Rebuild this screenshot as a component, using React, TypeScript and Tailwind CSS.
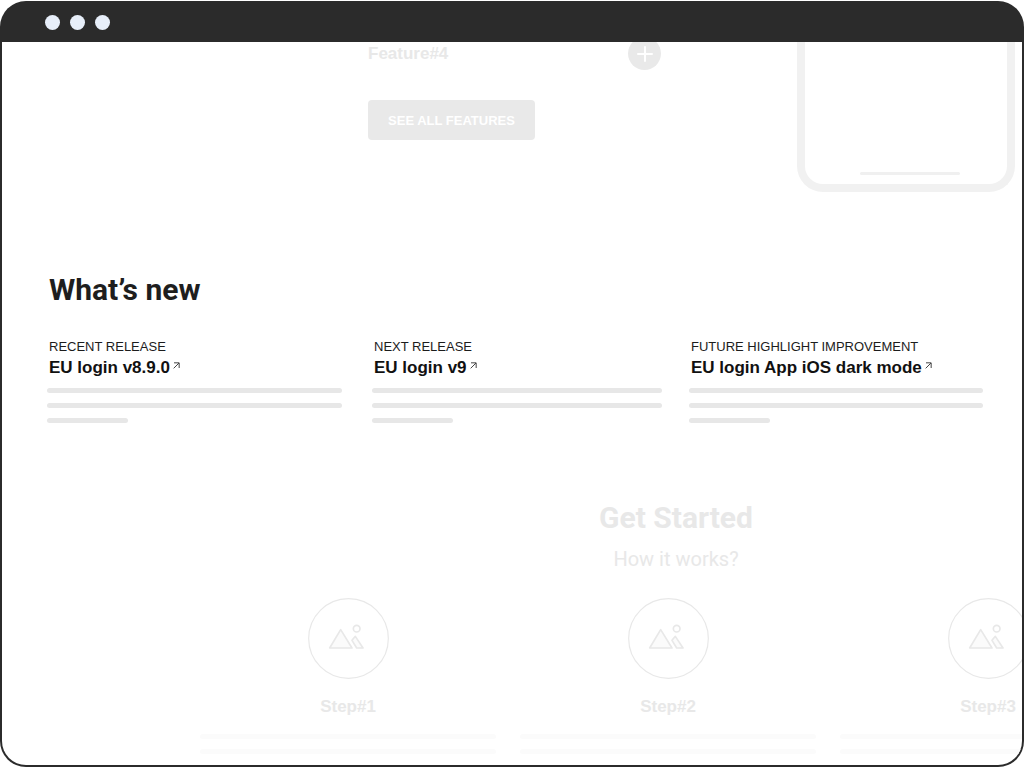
import React from "react";

const releases = [
  { label: "RECENT RELEASE", title: "EU login v8.9.0", pad: "pr-[30px]" },
  { label: "NEXT RELEASE", title: "EU login v9", pad: "pr-[27px]" },
  { label: "FUTURE HIGHLIGHT IMPROVEMENT", title: "EU login App iOS dark mode", pad: "" },
];

const steps = ["Step#1", "Step#2", "Step#3"];

function ArrowOut() {
  return (
    <svg className="mt-[7px] size-[7px] shrink-0" viewBox="0 0 21 21" fill="none" stroke="#444" strokeWidth="3" aria-hidden="true">
      <path d="M2 19 L18 3 M3 2.5 H18.5 V18" />
    </svg>
  );
}

function StepPicture() {
  return (
    <svg className="size-[81px]" viewBox="0 0 243 243" fill="none" stroke="#e8e8e8" strokeWidth="5" strokeLinejoin="round" aria-hidden="true">
      <circle cx="121.5" cy="121.5" r="119.5" strokeWidth="3.5" />
      <path d="M98 95 L132 150 H65 Z" fill="#fbfbfb" />
      <path d="M132 127 L142 115 L165 150 H146 Z" fill="#fbfbfb" />
      <circle cx="146" cy="92" r="10" />
    </svg>
  );
}

export default function App() {
  return (
    <div className="flex min-h-screen flex-col bg-white py-px font-['Liberation_Sans',Arial,sans-serif]">
      <div className="flex flex-1 flex-col overflow-hidden rounded-[26px] bg-[#2b2b2b] px-[2px] pb-[2px]">
        <header className="flex h-[41px] shrink-0 items-center gap-[10px] pt-[2px] pl-[43px]">
          <span className="size-[15px] rounded-full bg-[#e7eef9]" />
          <span className="size-[15px] rounded-full bg-[#e7eef9]" />
          <span className="size-[15px] rounded-full bg-[#e7eef9]" />
        </header>

        <main className="flex-1 overflow-hidden rounded-b-3xl bg-white">
          <section className="flex justify-between overflow-hidden pr-[7px] pl-[366px]">
            <div className="-mt-[5px] w-[293px]">
              <div className="flex items-center justify-between">
                <h3 className="text-[17px] leading-6 font-bold text-[#e8e8e8]">Feature#4</h3>
                <button type="button" aria-label="Expand Feature#4" className="flex size-[33px] items-center justify-center rounded-full bg-[#e9e9e9]">
                  <svg className="size-4" viewBox="0 0 16 16" stroke="#fff" strokeWidth="2" strokeLinecap="round" aria-hidden="true">
                    <path d="M8 1 V15 M1 8 H15" />
                  </svg>
                </button>
              </div>
              <button type="button" className="mt-[30px] h-10 w-[167px] rounded-sm bg-[#e9e9e9] pt-[2px] text-[13px] font-bold text-white">
                SEE ALL FEATURES
              </button>
            </div>
            <div className="flex h-[150px] w-[218px] items-end justify-center rounded-b-[26px] border-8 border-t-0 border-[#f1f1f1] pb-[9px]">
              <span className="ml-2 h-[3px] w-[100px] rounded-full bg-[#f0f0f0]" />
            </div>
          </section>

          <section className="mt-20 pr-[39px] pl-[45px]">
            <h2 className="pl-[2px] font-['Roboto',sans-serif] text-[30px] leading-9 font-bold text-[#1e1e1e]">What’s new</h2>
            <div className="mt-[31px] grid grid-cols-[325fr_317fr_294fr]">
              {releases.map((r) => (
                <article key={r.label} className={r.pad}>
                  <p className="pl-[2px] text-[13px] leading-4 text-[#1c1c1c]">{r.label}</p>
                  <h3 className="pl-[2px] text-[17px] leading-[26px] font-bold text-[#111]">
                    <a href="#release" className="flex items-start gap-[3px]">
                      {r.title}
                      <ArrowOut />
                    </a>
                  </h3>
                  <div className="mt-[7px] flex flex-col gap-[10px]">
                    <span className="h-[5px] rounded-full bg-[#e7e7e7]" />
                    <span className="h-[5px] rounded-full bg-[#e7e7e7]" />
                    <span className="h-[5px] w-[81px] rounded-full bg-[#e7e7e7]" />
                  </div>
                </article>
              ))}
            </div>
          </section>

          <section className="mt-[77px] pb-[11px]">
            <div className="pl-[328px] text-center font-['Roboto',sans-serif] text-[#e8e8e8]">
              <h2 className="text-[30px] leading-9 font-bold">Get Started</h2>
              <p className="mt-[11px] text-[20px] leading-6">How it works?</p>
            </div>
            <div className="mt-[27px] flex gap-6 pl-[198px]">
              {steps.map((step) => (
                <article key={step} className="flex w-[296px] shrink-0 flex-col items-center">
                  <StepPicture />
                  <h3 className="mt-4 text-[17px] leading-6 font-bold text-[#e8e8e8]">{step}</h3>
                  <div className="mt-[15px] flex w-full flex-col gap-[10px]">
                    <span className="h-[5px] rounded-full bg-[#fbfbfb]" />
                    <span className="h-[5px] rounded-full bg-[#fbfbfb]" />
                  </div>
                </article>
              ))}
            </div>
          </section>
        </main>
      </div>
    </div>
  );
}
